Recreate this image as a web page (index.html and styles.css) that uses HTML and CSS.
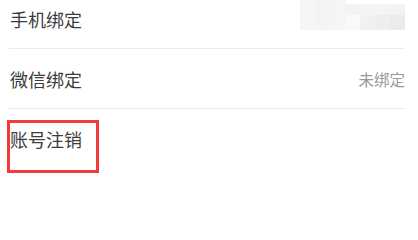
FILE: index.html
```html
<!DOCTYPE html>
<html lang="zh-CN">
<head>
<meta charset="utf-8">
<link rel="stylesheet" href="styles.css">
</head>
<body>
<div class="list">
  <div class="row row-first">
    <span class="label">手机绑定</span>
    <div class="mosaic">
      <i class="c1"></i><i class="c2"></i><i class="c3"></i><i class="c4 cut"></i><i class="c5 cut"></i><i class="c6 cut"></i><i class="c7 cut"></i>
      <i class="c1"></i><i class="c2"></i><i class="c3"></i><i class="d4"></i><i class="d5"></i><i class="d6"></i><i class="d7"></i>
    </div>
  </div>
  <div class="row">
    <span class="label">微信绑定</span>
    <span class="value">未绑定</span>
  </div>
  <div class="row-last">
    <span class="highlight"><span class="label">账号注销</span></span>
  </div>
</div>
</body>
</html>
```

FILE: styles.css
```css
html, body {
  margin: 0;
  padding: 0;
  background: #ffffff;
  overflow: hidden;
}
body {
  font-family: "Noto Sans CJK SC", "Noto Sans", sans-serif;
  color: #3c3c3c;
}
.list {
  margin-top: -11px;
  padding-left: 9px;
  padding-right: 13px;
}
.row {
  height: 59px;
  border-bottom: 1px solid #ececec;
  display: flex;
  align-items: center;
  justify-content: space-between;
}
.label {
  font-size: 18px;
  line-height: 26px;
  padding-left: 1px;
  color: #3c3c3c;
}
.value {
  font-size: 15.5px;
  line-height: 22px;
  color: #9a9a9a;
}
.row-first {
  align-items: center;
}
.mosaic {
  align-self: flex-start;
  margin-top: 11px;
  width: 105px;
  height: 30px;
  display: grid;
  grid-template-columns: repeat(7, 15px);
  grid-template-rows: repeat(2, 15px);
}
.mosaic i { display: block; }
.c1 { background: #f6f6f6; }
.c2 { background: #f4f4f4; }
.c3 { background: #f5f5f5; }
.c4 { background: #f2f4f2; }
.c5 { background: #f3f5f3; }
.c6 { background: #f3f4f3; }
.c7 { background: #f2f3f2; }
.cut { border-top: 4px solid #ffffff; }
.d4 { background: #f9f9f9; }
.d5 { background: #f1f1f1; }
.d6 { background: #edeeef; }
.d7 { background: #eaebec; }
.row-last {
  padding-top: 11px;
  margin-left: -2px;
}
.highlight {
  display: inline-block;
  border: 3px solid #f23b3b;
  padding: 3px 14px 18px 0;
}
.highlight .label {
  padding-left: 0;
  display: block;
}
```
